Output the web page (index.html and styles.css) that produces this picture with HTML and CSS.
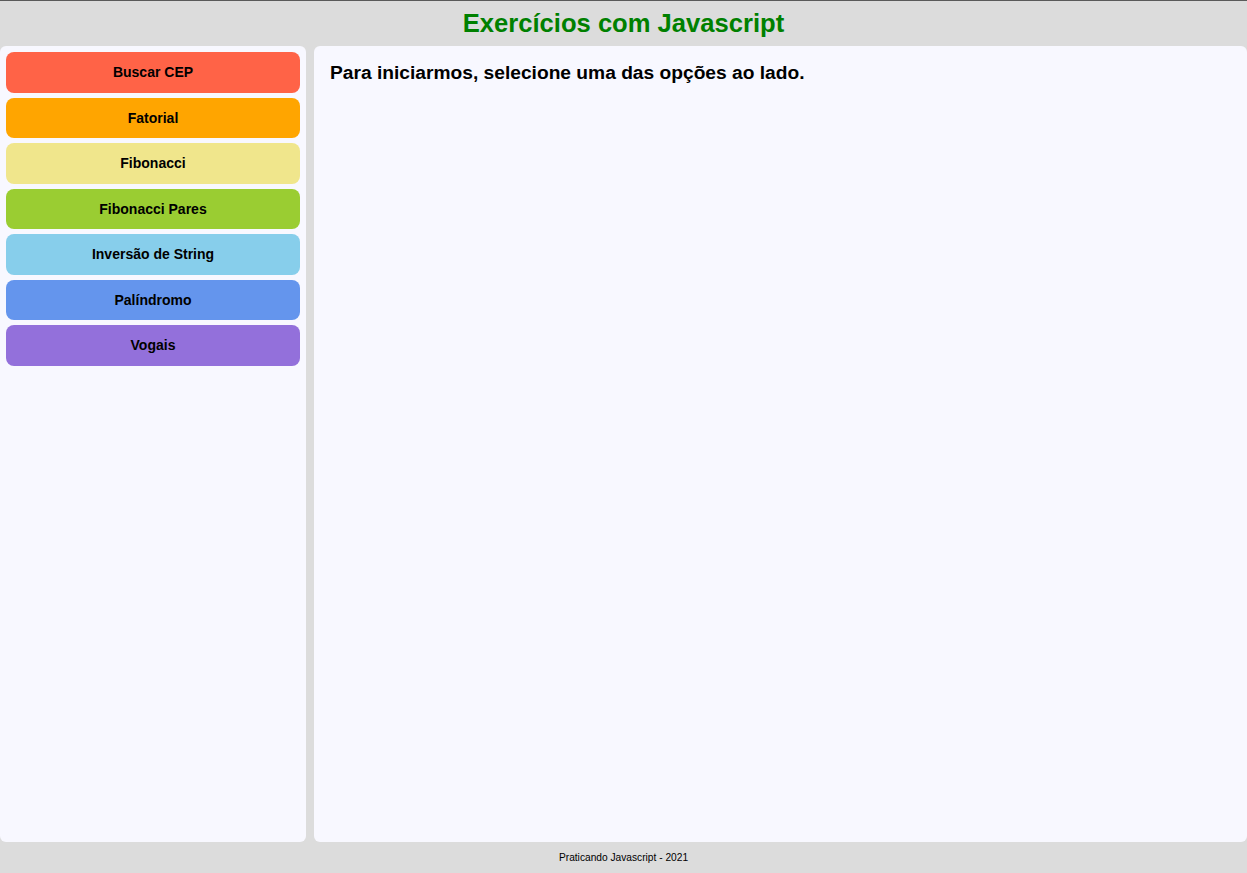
FILE: index.html
```html
<!DOCTYPE html>
<html lang="pt-BR">
<head>
<meta charset="utf-8">
<title>Exercícios com Javascript</title>
<link rel="stylesheet" href="styles.css">
</head>
<body>
<div class="page">
  <header class="header">
    <h1 class="title">Exercícios com Javascript</h1>
  </header>
  <div class="content">
    <nav class="sidebar">
      <button class="btn btn-cep">Buscar CEP</button>
      <button class="btn btn-fat">Fatorial</button>
      <button class="btn btn-fib">Fibonacci</button>
      <button class="btn btn-fibp">Fibonacci Pares</button>
      <button class="btn btn-inv">Inversão de String</button>
      <button class="btn btn-pal">Palíndromo</button>
      <button class="btn btn-vog">Vogais</button>
    </nav>
    <main class="main">
      <h2 class="intro">Para iniciarmos, selecione uma das opções ao lado.</h2>
    </main>
  </div>
  <footer class="footer">Praticando Javascript - 2021</footer>
</div>
</body>
</html>
```
FILE: styles.css
```css
* { box-sizing: border-box; }
html, body { margin: 0; padding: 0; height: 100%; }
body {
  background: #dcdcdc;
  font-family: "Liberation Sans", Arial, sans-serif;
  border-top: 1px solid #5a5a5a;
}
.page {
  display: flex;
  flex-direction: column;
  height: 872px;
}
.header {
  height: 45px;
  display: flex;
  align-items: center;
  justify-content: center;
}
.title {
  margin: 0;
  color: #008000;
  font-size: 25.6px;
  font-weight: bold;
}
.content {
  flex: 1;
  display: grid;
  grid-template-columns: 306px 1fr;
  gap: 8px;
}
.sidebar {
  background: #f8f8ff;
  border-radius: 6px;
  padding: 6px;
  display: flex;
  flex-direction: column;
  gap: 5px;
}
.btn {
  height: 40.5px;
  border: none;
  border-radius: 8px;
  font-family: "Liberation Sans", Arial, sans-serif;
  font-size: 14px;
  font-weight: bold;
  color: #000;
  cursor: pointer;
}
.btn-cep { background: #ff6347; }
.btn-fat { background: #ffa500; }
.btn-fib { background: #f0e68c; }
.btn-fibp { background: #9acd32; }
.btn-inv { background: #87ceeb; }
.btn-pal { background: #6495ed; }
.btn-vog { background: #9370db; }
.main {
  background: #f8f8ff;
  border-radius: 6px;
  padding: 16px 16px;
}
.intro {
  margin: 0;
  font-size: 19.2px;
  font-weight: bold;
  color: #000;
}
.footer {
  height: 31px;
  display: flex;
  align-items: center;
  justify-content: center;
  font-size: 10.2px;
  color: #000;
}
```
